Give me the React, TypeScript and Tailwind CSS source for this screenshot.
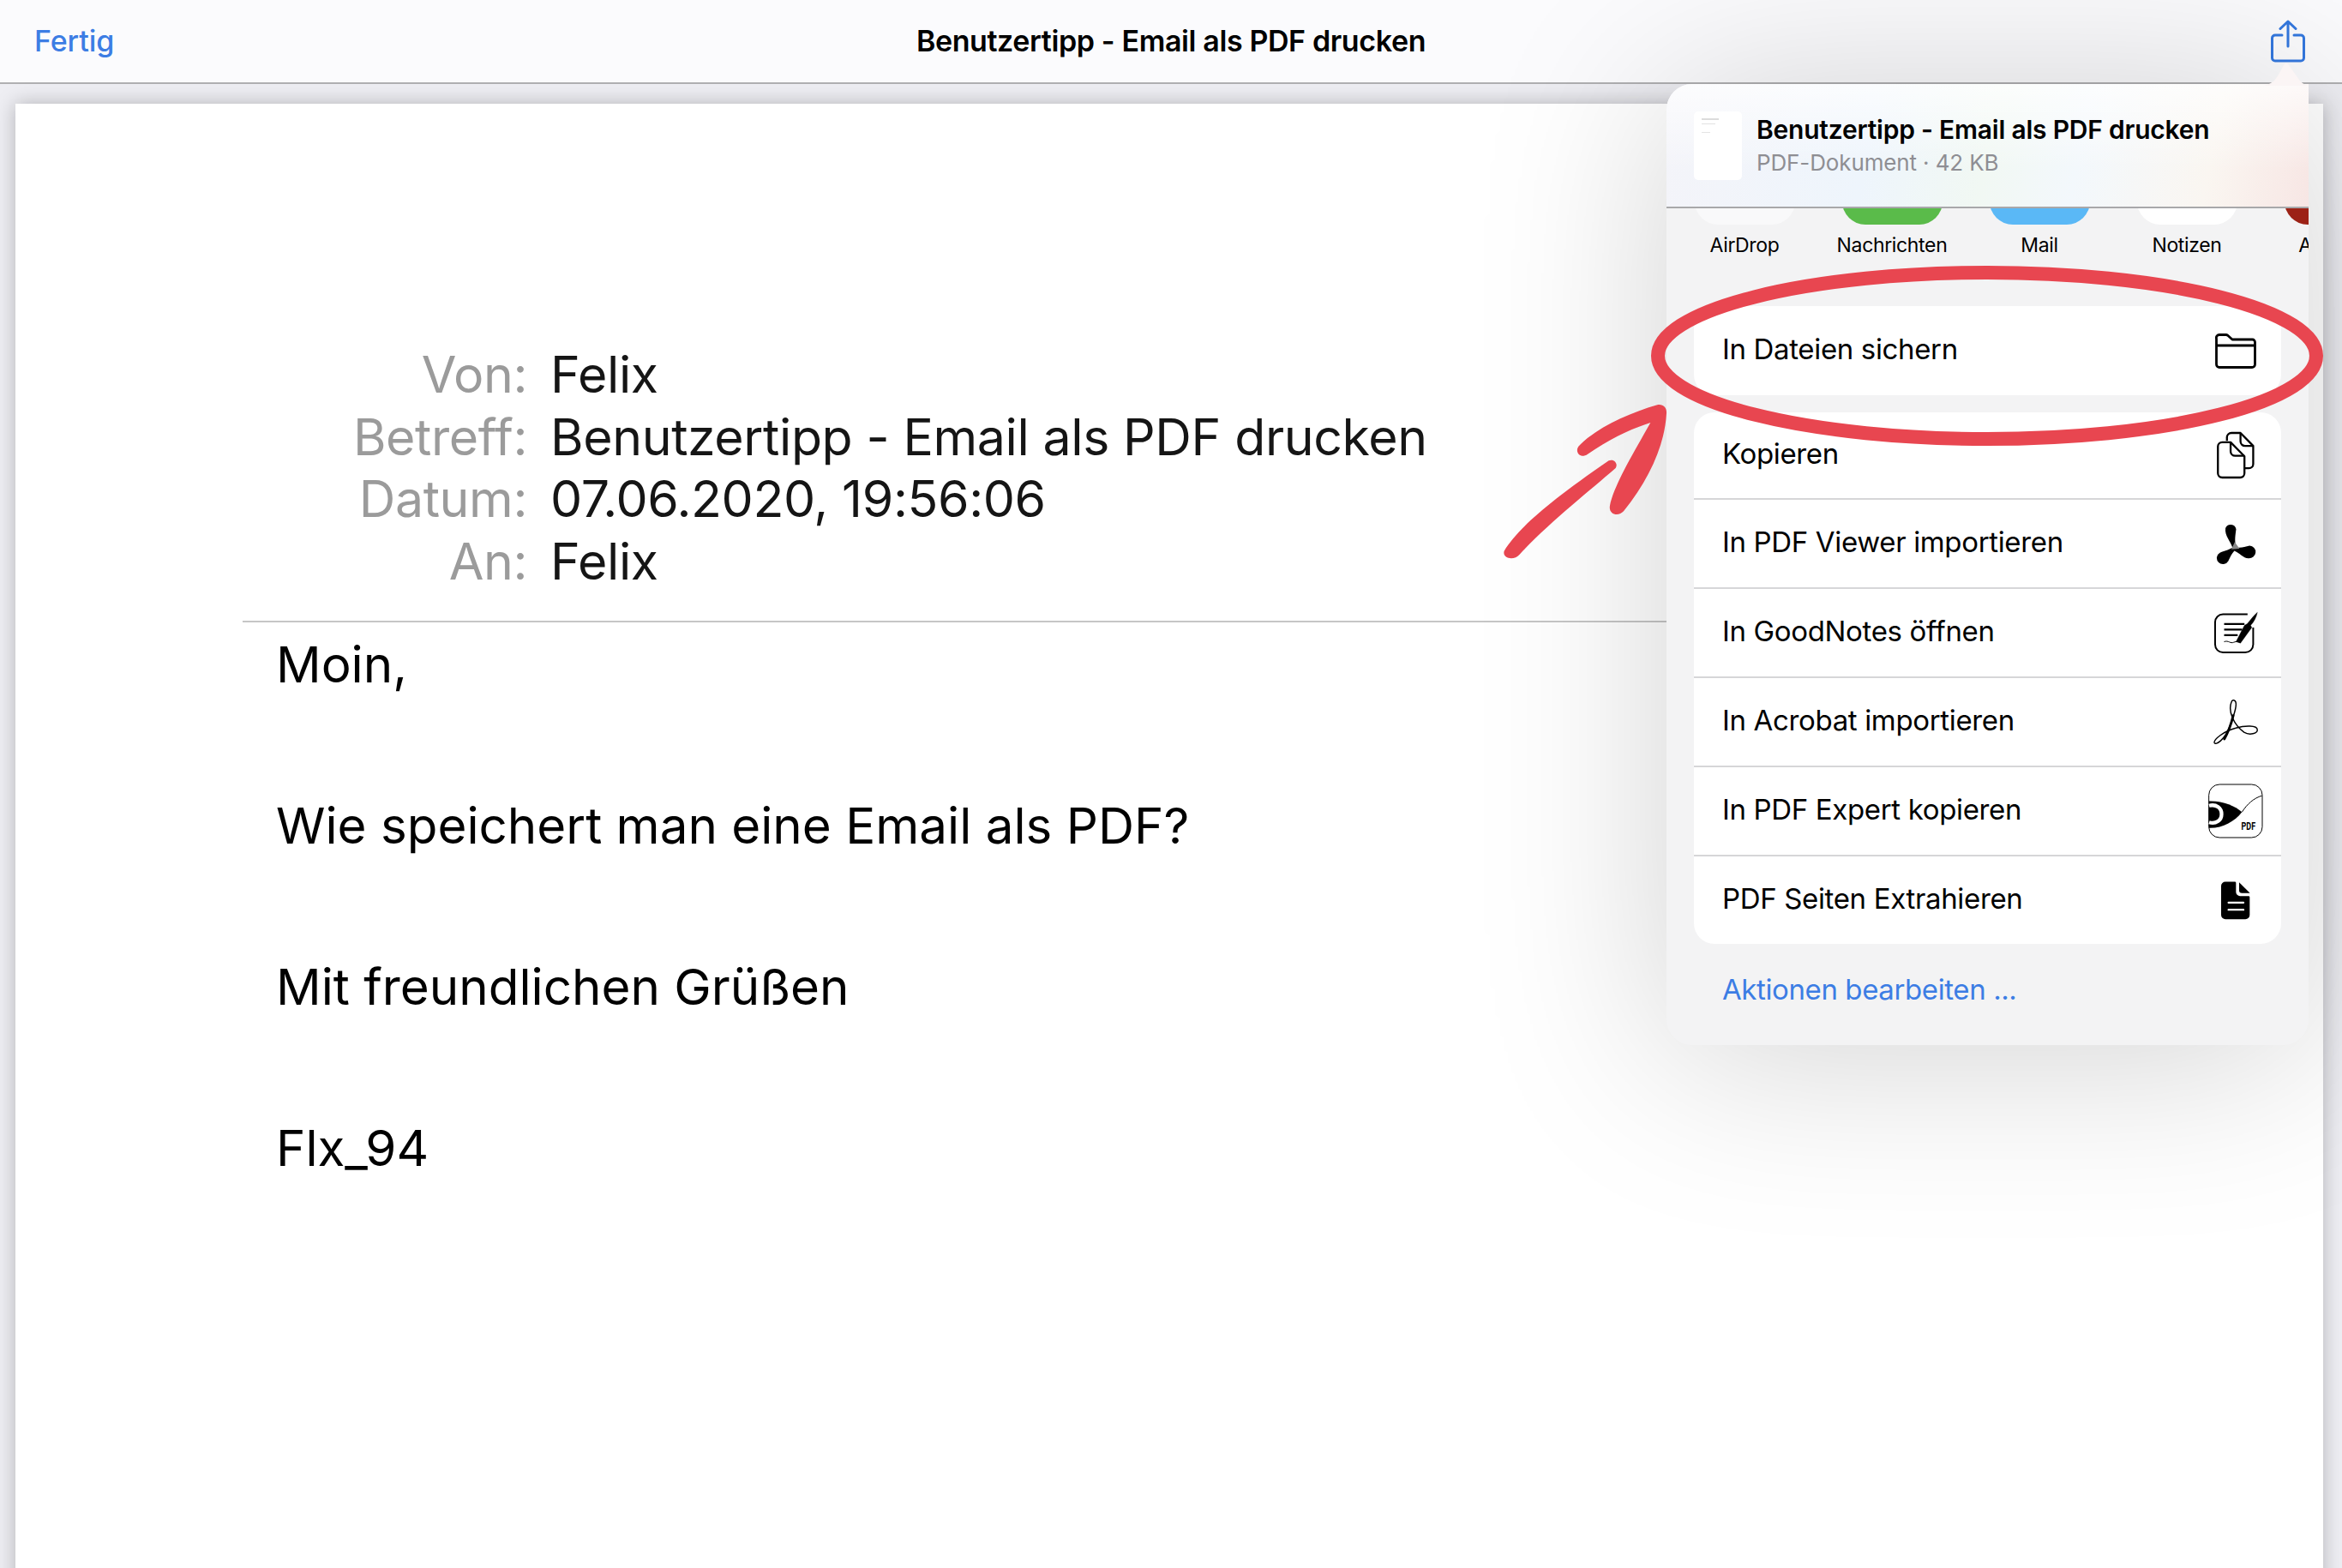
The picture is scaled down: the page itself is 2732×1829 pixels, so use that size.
const sans = "font-['Inter','Noto_Sans',sans-serif]";

const shareTargets = [
  { name: "AirDrop", tile: "bg-[#f9f9fa]" },
  { name: "Nachrichten", tile: "bg-[#5abb4a]" },
  { name: "Mail", tile: "bg-[#5ab8f6]" },
  { name: "Notizen", tile: "bg-white" },
  { name: "Acrobat", tile: "bg-[#9c2216]" },
];

function FolderIcon() {
  return (
    <svg width="48" height="41" viewBox="0 0 48 41" fill="none" stroke="#000" strokeWidth="2.8" strokeLinejoin="round">
      <path d="M1.500 6V36a3.500 3.500 0 0 0 3.500 3.500H43a3.500 3.500 0 0 0 3.500-3.500V10a3 3 0 0 0-3-3H20l-5-4.500a3 3 0 0 0-2-1H5A3.500 3.500 0 0 0 1.500 6Z" />
      <path d="M1.500 14H46.500" />
    </svg>
  );
}

function CopyIcon() {
  return (
    <svg width="46" height="56" viewBox="140 66 138 170" fill="none" stroke="#000" strokeWidth="7" strokeLinejoin="round">
      <path d="M178 100V88a16 16 0 0 1 16-16h32l45 46v64a15 15 0 0 1-15 15h-17" />
      <path d="M226 72v30a16 16 0 0 0 16 16h29" />
      <path d="M146 120a15 15 0 0 1 15-15h30l49 50v60a15 15 0 0 1-15 15h-64a15 15 0 0 1-15-15Z" fill="#fff" />
      <path d="M191 105v32a16 16 0 0 0 16 16h33" />
    </svg>
  );
}

function ViewerIcon() {
  return (
    <svg width="49" height="49" viewBox="135 386 150 146">
      <path d="M172 402a20 20 0 0 1 38 4C208 425 203 445 210 470L198 476C192 450 168 430 172 402Z" />
      <path d="M205 465 212 478C195 488 190 505 182 520a22 22 0 1 1-30-30C170 482 190 480 205 465Z" />
      <path d="M205 468C225 478 238 468 258 465a23 22 0 1 1-4 45C235 510 222 490 205 484Z" />
      <path d="M193 478l12-26 17 24Z" fill="#888" />
    </svg>
  );
}

function GoodNotesIcon() {
  return (
    <svg width="52" height="50" viewBox="134 694 158 148" fill="none" stroke="#000">
      <path d="M255 703h-87a28 28 0 0 0-28 28v79a28 28 0 0 0 28 28h79a28 28 0 0 0 28-28v-60" strokeWidth="6" />
      <path d="M172 737h72M172 757h64M172 777h48" strokeWidth="7" />
      <path d="M172 800c16-6 22 8 34 2 10-4 16-2 24 0" strokeWidth="3" />
      <path d="M290 696C286 714 278 730 266 742L270 750 230 805 214 800 244 742 254 736C266 722 278 706 290 696Z" fill="#000" strokeWidth="1" />
    </svg>
  );
}

function AcrobatIcon() {
  return (
    <svg width="54" height="53" viewBox="122 132 166 164" fill="none" stroke="#000" strokeWidth="4.500">
      <path d="M190 140c-15 35 10 85 45 110 20 12 50 5 48-10-1-15-43-15-78-5-40 10-80 40-77 53 4 10 37-8 57-63 15-40 30-85 15-90-4-2-8 0-10 5Z" />
      <path d="M196 190c-6 25-12 50-32 84" strokeWidth="9" strokeLinecap="round" />
    </svg>
  );
}

function ExpertIcon() {
  return (
    <svg width="64" height="64" viewBox="110 428 194 194" fill="none">
      <rect x="112" y="431" width="189" height="188" rx="38" fill="#fff" stroke="#000" strokeWidth="3" />
      <path d="M112 490c48-2 92 16 117 39-26 34-70 58-117 56Z" fill="#000" />
      <path d="M113 506c26-6 44 8 44 30s-20 36-44 29" stroke="#fff" strokeWidth="13" />
      <path d="M229 529c18-28 42-50 71-58" stroke="#000" strokeWidth="3" />
      <text x="227" y="592" fontFamily="Roboto, sans-serif" fontWeight="700" fontSize="36" fill="#000" textLength="50" lengthAdjust="spacingAndGlyphs">
        PDF
      </text>
    </svg>
  );
}

function FileIcon() {
  return (
    <svg width="34" height="45" viewBox="155 772 102 134">
      <path d="M170 773h33a4 4 0 0 1 4 4v32a14 14 0 0 0 14 14h30a4 4 0 0 1 4 4v62a15 15 0 0 1-15 15h-70a15 15 0 0 1-15-15V788a15 15 0 0 1 15-15Z" />
      <path d="M218 775l38 38h-28a10 10 0 0 1-10-10Z" />
      <path d="M181 846h52M181 871h52" stroke="#fff" strokeWidth="7" strokeLinecap="round" />
    </svg>
  );
}

const actions = [
  { label: "Kopieren", icon: <CopyIcon /> },
  { label: "In PDF Viewer importieren", icon: <ViewerIcon /> },
  { label: "In GoodNotes öffnen", icon: <GoodNotesIcon /> },
  { label: "In Acrobat importieren", icon: <AcrobatIcon /> },
  { label: "In PDF Expert kopieren", icon: <ExpertIcon /> },
  { label: "PDF Seiten Extrahieren", icon: <FileIcon /> },
];

const meta = [
  { label: "Von:", value: "Felix" },
  { label: "Betreff:", value: "Benutzertipp - Email als PDF drucken" },
  { label: "Datum:", value: "07.06.2020, 19:56:06" },
  { label: "An:", value: "Felix" },
];

function ActionRow({ label, icon }: { label: string; icon: React.ReactNode }) {
  return (
    <div className="flex h-[104px] items-center justify-between border-t-2 border-[#d6d6d8] pl-[33px] first:h-[100px] first:border-t-0">
      <span className="-mt-[2px] text-[33px] tracking-[-0.35px] text-black">{label}</span>
      <span className="flex w-[70px] mr-[18px] items-center justify-center">{icon}</span>
    </div>
  );
}

function SharePopover() {
  return (
    <div className="absolute left-[1944px] top-[98px] z-10 h-[1121px] w-[749px]">
      {/* caret pointing at the share button */}
      <svg className="absolute -top-[26px] right-0" width="52" height="28" viewBox="0 0 52 28">
        <path d="M0 28c10-2 14-8 17-13l6-11c2-3 4-3 6 0l12 17c3 4 8 7 11 7Z" fill="#fbf5f5" />
      </svg>
      <div className="flex h-full flex-col overflow-hidden rounded-[30px] rounded-tr-none bg-[#f3f3f4] shadow-[0_12px_220px_rgba(0,0,0,0.18)]">
        <div className="flex h-[145px] shrink-0 items-center gap-[17px] border-b-2 border-[#a8a8aa] bg-[linear-gradient(180deg,rgba(255,255,255,0.75),rgba(255,255,255,0)_70%),linear-gradient(100deg,#f4f4f9_0%,#eef5fc_32%,#f1f8f3_50%,#f3f8fc_64%,#faf6f1_84%,#f7e6e4_100%)] pl-[32px]">
          <div className="h-[80px] w-[56px] rounded-[5px] bg-white pl-[9px] pt-[8px]">
            <div className="h-[2px] w-[20px] bg-[#dcdcdc]" />
            <div className="mt-[4px] h-[1px] w-[16px] bg-[#e2e2e2]" />
            <div className="mt-[9px] h-[1px] w-[10px] bg-[#e4e4e4]" />
          </div>
          <div>
            <div className="text-[30px] leading-[39px] font-semibold tracking-[-0.22px] text-black">Benutzertipp - Email als PDF drucken</div>
            <div className="text-[26px] leading-[37px] tracking-[-0.13px] text-[#8e8e93]">PDF-Dokument · 42 KB</div>
          </div>
        </div>

        <div className="flex shrink-0 pl-[5px]">
          {shareTargets.map((t) => (
            <div key={t.name} className="flex w-[172px] shrink-0 flex-col items-center">
              <div className="h-[19px] overflow-hidden">
                <div className={`-mt-[98px] h-[117px] w-[117px] rounded-[27px] ${t.tile}`} />
              </div>
              <div className="mt-[9px] text-[23px] leading-[30px] tracking-[-0.35px] whitespace-nowrap text-black">{t.name}</div>
            </div>
          ))}
        </div>

        <div className="mx-[32px] mt-[56px] flex h-[104px] shrink-0 items-center justify-between rounded-[24px] bg-white pl-[33px]">
          <span className="-mt-[2px] text-[33px] tracking-[-0.35px] text-black">In Dateien sichern</span>
          <span className="mr-[18px] flex w-[70px] items-center justify-center">
            <FolderIcon />
          </span>
        </div>

        <div className="mx-[32px] mt-[20px] shrink-0 overflow-hidden rounded-[24px] bg-white">
          {actions.map((a) => (
            <ActionRow key={a.label} label={a.label} icon={a.icon} />
          ))}
        </div>

        <div className="mt-[31px] pl-[65px] text-[33px] leading-[44px] tracking-[-0.4px] text-[#3c7de4]">Aktionen bearbeiten ...</div>
      </div>
    </div>
  );
}

function Annotations() {
  return (
    <>
      <svg className="absolute left-[1920px] top-[304px] z-20" width="796" height="222" viewBox="0 0 796 222" fill="none">
        <ellipse cx="398" cy="111" rx="384" ry="97" stroke="#e84650" strokeWidth="16" />
      </svg>
      <svg className="absolute left-[1720px] top-[450px] z-20" width="260" height="220" viewBox="0 0 780 660" fill="#e84650">
        <path d="M104 578C150 505 240 420 470 262c18-8 34 10 24 26C400 370 260 480 158 590c-20 24-62 14-54-12Z" />
        <path d="M364 212c56-60 170-115 276-145 20-4 34 10 32 30-6 110-60 230-150 342-18 20-54 12-48-20 14-70 80-180 142-290-90 30-150 62-222 112-22 14-44-8-30-29Z" />
      </svg>
    </>
  );
}

export default function App() {
  return (
    <div className={`relative h-[1829px] w-[2732px] overflow-hidden bg-[#eeeef3] ${sans}`}>
      <header className="grid h-[98px] grid-cols-[1fr_auto_1fr] items-center border-b-2 border-[#b0b0b2] bg-[#fbfbfd] px-[40px]">
        <span className="-mt-[2px] text-[34px] font-medium tracking-[-0.1px] text-[#3c7de4]">Fertig</span>
        <span className="-mt-[2px] text-[34px] font-semibold tracking-[-0.38px] text-black">Benutzertipp - Email als PDF drucken</span>
        <span className="flex justify-end pr-[3px]">
          <svg width="40" height="50" viewBox="0 0 40 50" fill="none" stroke="#3478df" strokeWidth="3" strokeLinecap="round" strokeLinejoin="round">
            <path d="M13 18H5a3.500 3.500 0 0 0-3.500 3.500v23A3.500 3.500 0 0 0 5 48h30a3.500 3.500 0 0 0 3.500-3.500v-23A3.500 3.500 0 0 0 35 18h-8" />
            <path d="M20 31V2M11 10.500 20 2l9 8.500" />
          </svg>
        </span>
      </header>

      <main className="ml-[18px] mr-[22px] mt-[23px] h-[1750px] bg-white pt-[280px] shadow-[0_0_22px_rgba(0,0,0,0.25)]">
        <div className="grid grid-cols-[597px_1fr] gap-x-[27px] text-[59px] leading-[72.500px] tracking-[-0.4px]">
          {meta.map((m) => (
            <div key={m.label} className="contents">
              <span className="text-right text-[#9b9b9b]">{m.label}</span>
              <span className="text-[#151515]">{m.value}</span>
            </div>
          ))}
        </div>
        <div className="ml-[265px] mr-[40px] mt-[33px] h-[2px] bg-[#c6c6c6]" />
        <div className="pl-[304px] pt-[2px] text-[58.300px] leading-[94px] text-black">
          <p>Moin,</p>
          <p className="mt-[94px]">Wie speichert man eine Email als PDF?</p>
          <p className="mt-[94px]">Mit freundlichen Grüßen</p>
          <p className="mt-[94px]">Flx_94</p>
        </div>
      </main>

      <SharePopover />
      <Annotations />
    </div>
  );
}
